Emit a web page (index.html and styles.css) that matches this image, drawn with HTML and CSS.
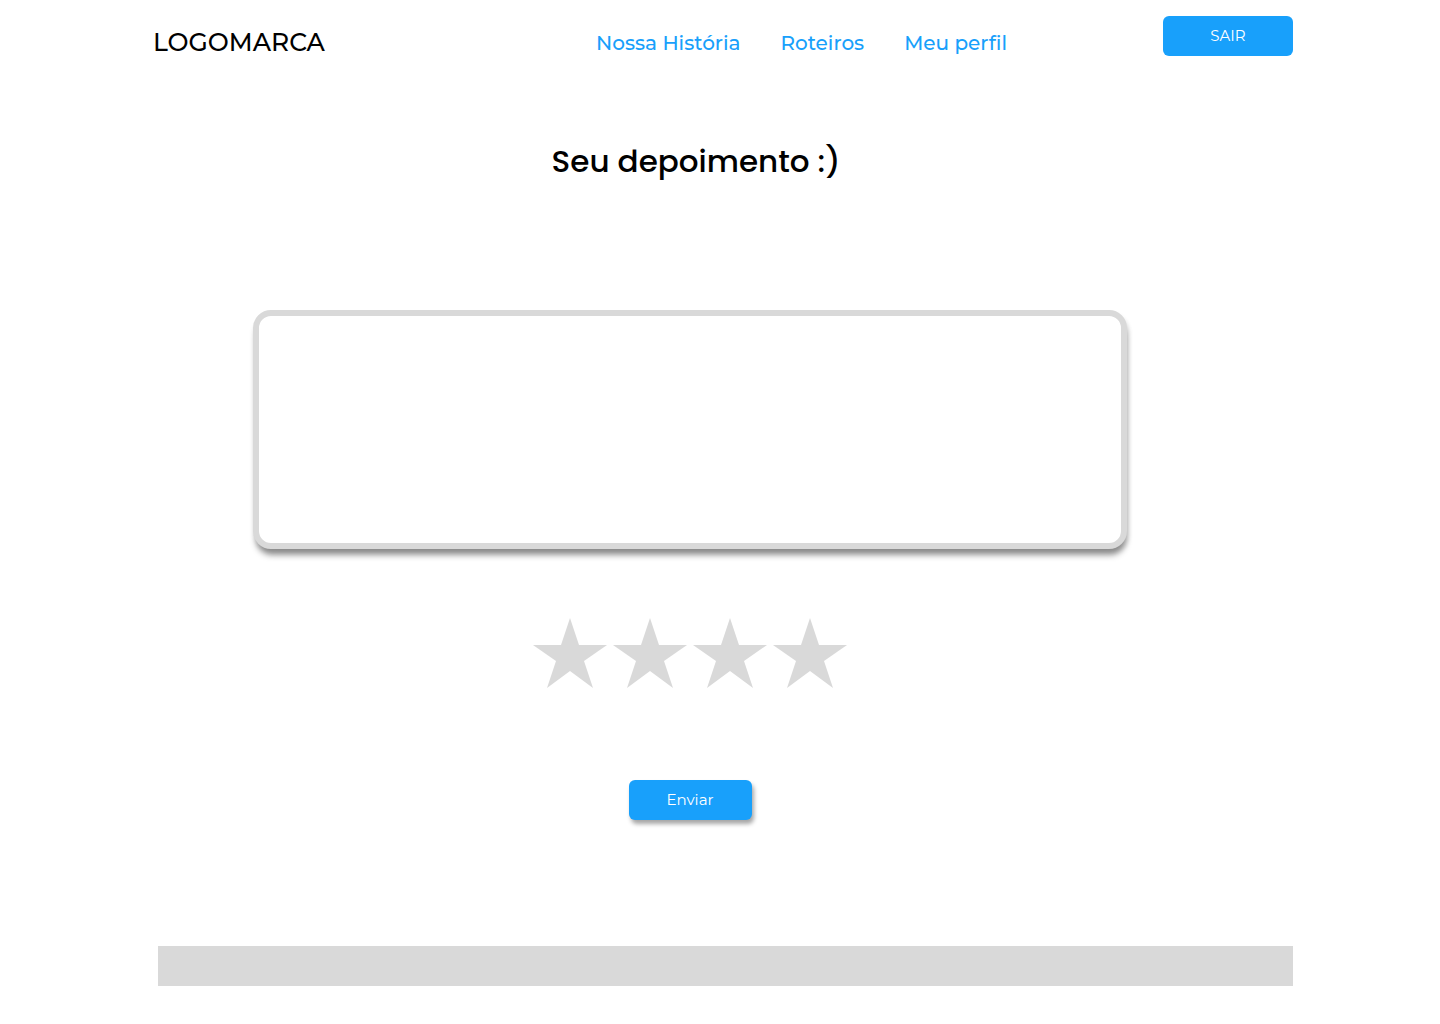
FILE: index.html
```html
<!DOCTYPE html>
<html lang="pt-BR">
<head>
<meta charset="utf-8">
<meta name="viewport" content="width=device-width, initial-scale=1">
<title>Seu depoimento</title>
<link rel="stylesheet" href="styles.css">
</head>
<body>
<header class="header">
  <a class="logo" href="#">LOGOMARCA</a>
  <nav class="nav">
    <a href="#">Nossa História</a>
    <a href="#">Roteiros</a>
    <a href="#">Meu perfil</a>
  </nav>
  <button class="button button-exit" type="button">SAIR</button>
</header>
<main class="main">
  <h1 class="title">Seu depoimento :)</h1>
  <form class="form">
    <textarea class="message" aria-label="Seu depoimento"></textarea>
    <div class="rating" role="group" aria-label="Avaliação">
      <button class="star" type="button" aria-label="1 estrela"><svg viewBox="0 0 74 70"><path d="M37 0l9 27h28L51 43l9 27-23-17-23 17 9-27L0 27h28z"/></svg></button>
      <button class="star" type="button" aria-label="2 estrelas"><svg viewBox="0 0 74 70"><path d="M37 0l9 27h28L51 43l9 27-23-17-23 17 9-27L0 27h28z"/></svg></button>
      <button class="star" type="button" aria-label="3 estrelas"><svg viewBox="0 0 74 70"><path d="M37 0l9 27h28L51 43l9 27-23-17-23 17 9-27L0 27h28z"/></svg></button>
      <button class="star" type="button" aria-label="4 estrelas"><svg viewBox="0 0 74 70"><path d="M37 0l9 27h28L51 43l9 27-23-17-23 17 9-27L0 27h28z"/></svg></button>
    </div>
    <button class="button button-send" type="submit">Enviar</button>
  </form>
</main>
<footer class="footer"></footer>
</body>
</html>
```

FILE: styles.css
```css
* {
  box-sizing: border-box;
}

body {
  margin: 0;
  background: #fff;
  color: #000;
  font-family: Montserrat, Inter, sans-serif;
}

.header {
  display: flex;
  align-items: flex-start;
  padding: 16px 147px 0 153px;
}

.logo {
  padding-top: 10px;
  color: #000;
  font-size: 25px;
  font-weight: 500;
  line-height: 32px;
  text-decoration: none;
}

.nav {
  display: flex;
  gap: 40px;
  margin: 0 156px 0 auto;
  padding-top: 15px;
}

.nav a {
  color: #18a0fb;
  font-size: 20px;
  font-weight: 500;
  line-height: 24px;
  text-decoration: none;
}

.button {
  height: 40px;
  padding: 0 0 2px;
  border: 0;
  border-radius: 6px;
  background: #18a0fb;
  color: #fff;
  font-family: inherit;
  font-size: 15px;
  cursor: pointer;
}

.button-exit {
  width: 130px;
}

.main {
  padding: 78px 313px 0 253px;
}

.title {
  margin: 0;
  padding-left: 12px;
  font-family: Poppins, Inter, sans-serif;
  font-size: 31px;
  font-weight: 500;
  line-height: 50px;
  text-align: center;
}

.form {
  display: flex;
  flex-direction: column;
  align-items: center;
  padding-top: 124px;
}

.message {
  display: block;
  width: 100%;
  height: 239px;
  padding: 16px;
  border: 6px solid #d9d9d9;
  border-radius: 18px;
  background: #fff;
  box-shadow: 1px 8px 6px -2px rgba(0, 0, 0, 0.4), 2px 4px 4px rgba(0, 0, 0, 0.1);
  font-family: inherit;
  font-size: 20px;
  resize: none;
}

.rating {
  display: flex;
  gap: 6px;
  margin-top: 69px;
}

.star {
  width: 74px;
  height: 70px;
  padding: 0;
  border: 0;
  background: none;
  cursor: pointer;
}

.star svg {
  display: block;
  width: 100%;
  fill: #d9d9d9;
}

.button-send {
  width: 123px;
  margin-top: 92px;
  box-shadow: 2px 4px 4px rgba(0, 0, 0, 0.35);
}

.footer {
  height: 40px;
  margin: 126px 147px 38px 158px;
  background: #d9d9d9;
}
```
